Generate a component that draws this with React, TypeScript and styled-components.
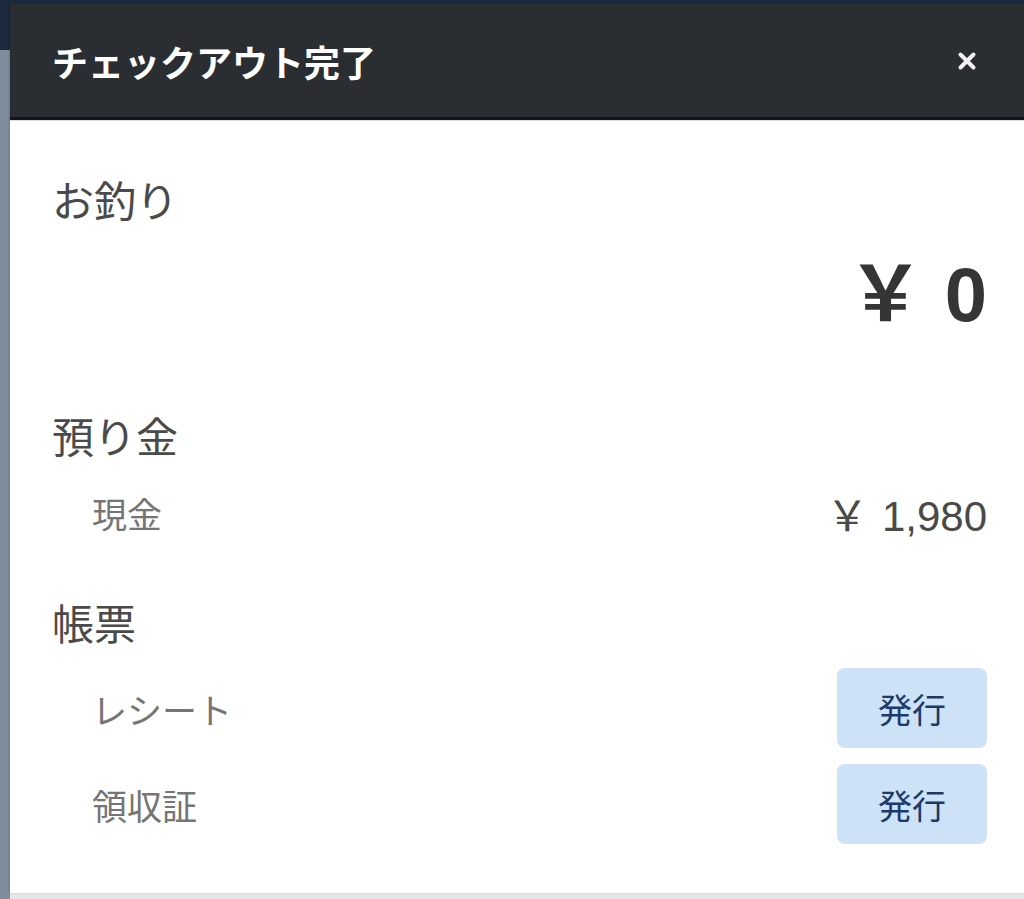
import React from "react";
import styled, { createGlobalStyle } from "styled-components";

const Global = createGlobalStyle`
  html, body { margin: 0; padding: 0; }
  body {
    width: 1024px; height: 899px; overflow: hidden;
    font-family: "Noto Sans CJK JP", "Noto Sans", sans-serif;
  }
`;

const Page = styled.div`
  position: relative;
  width: 1024px;
  height: 899px;
  display: grid;
  grid-template-rows: 50px 1fr;
  grid-template-columns: 10px 1fr;
  background: #e6e6e8;
`;

const TopBar = styled.div`
  grid-column: 1 / 3;
  background: #1c2a3d;
`;

const SideBar = styled.div`
  background: #7f8d9c;
`;

const Modal = styled.section`
  position: absolute;
  top: 4px;
  left: 10px;
  right: 0;
  bottom: 6px;
  display: flex;
  flex-direction: column;
  background: #fff;
  box-shadow: -1px 0 2px rgba(0, 0, 0, 0.15);
`;

const Header = styled.header`
  height: 113px;
  flex: none;
  display: flex;
  align-items: center;
  justify-content: space-between;
  padding: 0 45px 0 42px;
  background: #2a2e33;
  border-bottom: 3px solid #121416;
  box-shadow: 0 1px 1px rgba(0, 0, 0, 0.12);
`;

const Title = styled.h1`
  margin: 0;
  font-size: 36px;
  font-weight: 700;
  color: #fff;
  letter-spacing: 0;
`;

const Close = styled.button`
  width: 24px;
  height: 24px;
  padding: 0;
  border: none;
  background: transparent;
  display: flex;
  align-items: center;
  justify-content: center;
`;

const Body = styled.div`
  display: flex;
  flex-direction: column;
  padding: 51px 37px 0 42px;
`;

const Heading = styled.h2<{ $gap?: number }>`
  margin: ${(p) => p.$gap ?? 0}px 0 0;
  font-size: 42px;
  line-height: 56px;
  font-weight: 400;
  color: #4a4a4a;
`;

const BigAmount = styled.div`
  margin-top: 23px;
  text-align: right;
  font-family: "Liberation Sans", "Noto Sans CJK JP", sans-serif;
  font-size: 76px;
  line-height: 90px;
  font-weight: 700;
  color: #353535;
`;

const Row = styled.div<{ $gap: number; $h: number }>`
  margin-top: ${(p) => p.$gap}px;
  height: ${(p) => p.$h}px;
  display: flex;
  align-items: center;
  justify-content: space-between;
  padding-left: 40px;
`;

const SubLabel = styled.span`
  font-size: 35px;
  color: #757575;
`;

const Value = styled.span`
  font-family: "Liberation Sans", "Noto Sans CJK JP", sans-serif;
  font-size: 42px;
  word-spacing: 2px;
  color: #4a4a4a;
`;

const IssueButton = styled.button`
  width: 150px;
  height: 80px;
  border: none;
  border-radius: 8px;
  background: #cde2f6;
  color: #1b3b6c;
  font-family: inherit;
  font-size: 34px;
  padding: 0;
`;

export default function App() {
  return (
    <>
      <Global />
      <Page>
        <TopBar />
        <SideBar />
        <div />
        <Modal>
          <Header>
            <Title>チェックアウト完了</Title>
            <Close aria-label="閉じる">
              <svg width="20" height="20" viewBox="0 0 20 20">
                <path d="M3.5 3.5 L16.5 16.5 M16.5 3.5 L3.5 16.5" stroke="#f2f2f2" strokeWidth="4" strokeLinecap="round" />
              </svg>
            </Close>
          </Header>
          <Body>
            <Heading>お釣り</Heading>
            <BigAmount>￥ 0</BigAmount>
            <Heading $gap={67}>預り金</Heading>
            <Row $gap={25} $h={48}>
              <SubLabel>現金</SubLabel>
              <Value>￥ 1,980</Value>
            </Row>
            <Heading $gap={58}>帳票</Heading>
            <Row $gap={18} $h={80}>
              <SubLabel>レシート</SubLabel>
              <IssueButton>発行</IssueButton>
            </Row>
            <Row $gap={16} $h={80}>
              <SubLabel>領収証</SubLabel>
              <IssueButton>発行</IssueButton>
            </Row>
          </Body>
        </Modal>
      </Page>
    </>
  );
}
